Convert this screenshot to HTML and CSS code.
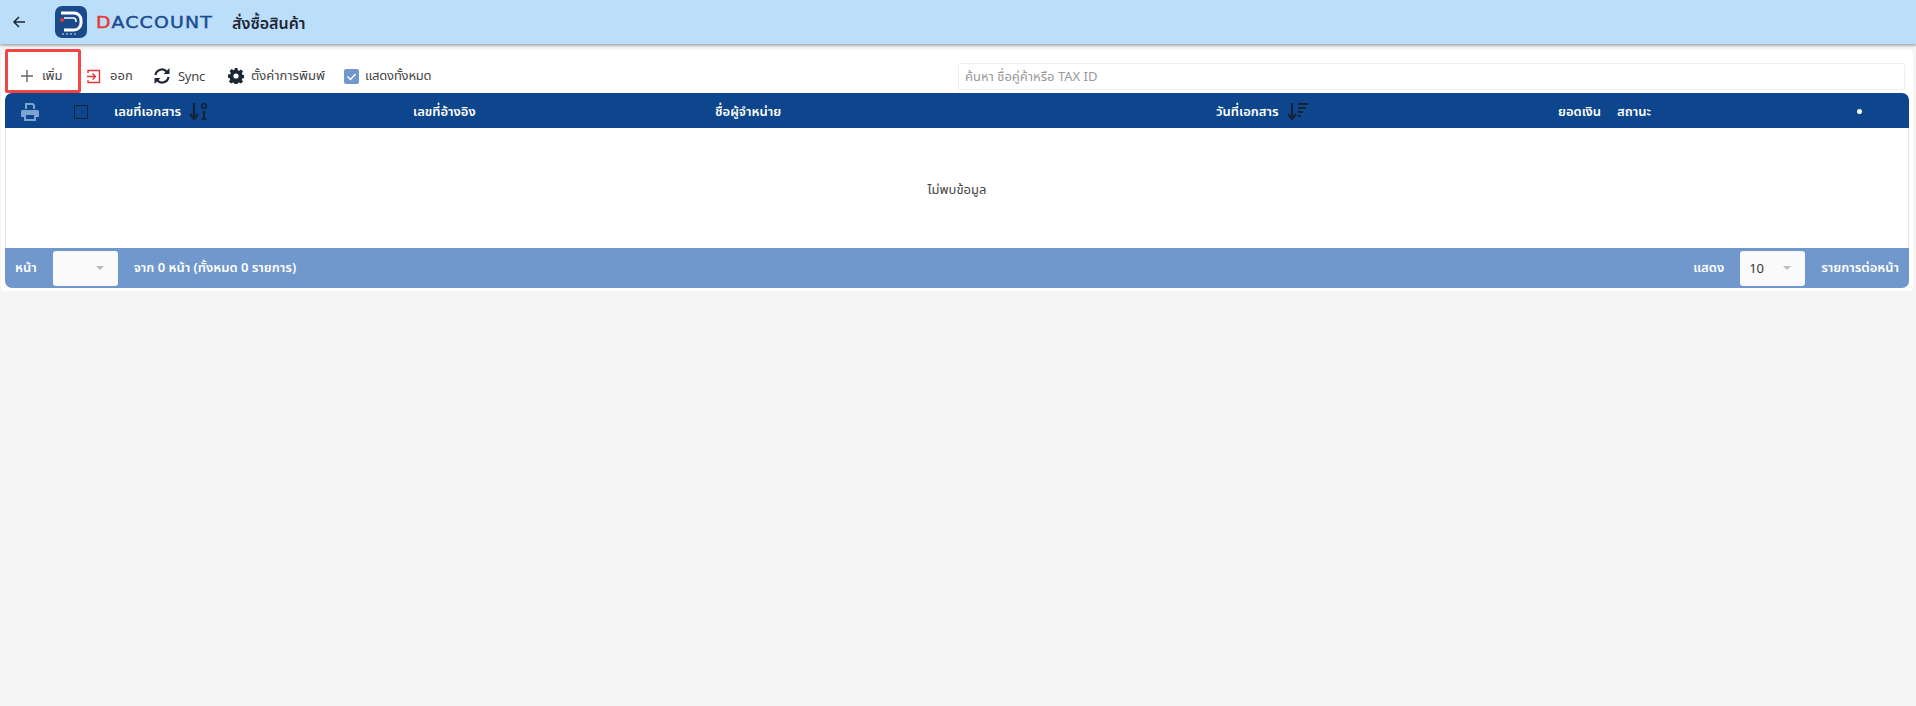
FILE: index.html
```html
<!DOCTYPE html>
<html lang="th">
<head>
  <meta charset="UTF-8" />
  <title>สั่งซื้อสินค้า</title>
  <link rel="stylesheet" href="styles.css">
</head>
<body>

  <header class="topbar">
    <svg class="back" width="16" height="16" viewBox="0 0 16 16"><path d="M14 8H3M8 3L3 8l5 5" fill="none" stroke="#1c2733" stroke-width="1.5"/></svg>
    <svg class="logo-mark" width="32" height="32" viewBox="0 0 32 32">
      <rect width="32" height="32" rx="7" fill="#1a4a8c"/>
      <path d="M6 7h13a7 7 0 0 1 7 7v3a7 7 0 0 1-7 7H9" fill="none" stroke="#fff" stroke-width="3"/>
      <path d="M9 12h9a3 3 0 0 1 3 3v1" fill="none" stroke="#fff" stroke-width="1.500"/>
      <circle cx="7" cy="14" r="2" fill="#e53935"/>
      <path d="M7 28h14" stroke="#cfe0f3" stroke-width="1.200" stroke-dasharray="2 2"/>
    </svg>
    <span class="logo-wrap"><span class="logo-text"><b>D</b>ACCOUNT</span></span>
    <h1 class="page-title">สั่งซื้อสินค้า</h1>
  </header>

  <main class="card">
    <div class="toolbar">
      <button class="tool tool-add">
        <svg width="14" height="14" viewBox="0 0 14 14"><path d="M7 1v12M1 7h12" stroke="#666" stroke-width="1.400"/></svg>
        เพิ่ม
      </button>
      <button class="tool tool-exit">
        <svg width="15" height="15" viewBox="0 0 15 15"><path d="M2 4V1.500h11.500v12H2V11" fill="none" stroke="#e53935" stroke-width="1.400"/><path d="M1 7.500h8M6.500 4.500l3 3-3 3" fill="none" stroke="#e53935" stroke-width="1.400"/></svg>
        ออก
      </button>
      <button class="tool tool-sync">
        <svg width="18" height="18" viewBox="0 0 18 18"><path d="M2.500 8a6.500 6.500 0 0 1 11.300-3.300M15.500 10a6.500 6.500 0 0 1-11.300 3.300" fill="none" stroke="#1c2733" stroke-width="2.200"/><path d="M16.500 1v6h-6zM1.500 17v-6h6z" fill="#1c2733"/></svg>
        Sync
      </button>
      <button class="tool tool-print">
        <svg width="16" height="16" viewBox="0 0 16 16"><path fill-rule="evenodd" fill="#1c2733" d="M6.600 0h2.800l.4 2.200 1.300.6 1.900-1.200 2 2-1.200 1.900.6 1.300 2.200.4v2.800l-2.200.4-.6 1.300 1.200 1.900-2 2-1.900-1.200-1.300.6-.4 2.200H6.600l-.4-2.200-1.300-.6L3 15.400l-2-2 1.200-1.900-.6-1.300L0 9.400V6.600l2.200-.4.6-1.300L1.600 3l2-2 1.900 1.200 1.300-.6zM8 5.400a2.600 2.600 0 1 0 0 5.200 2.600 2.600 0 0 0 0-5.200z"/></svg>
        ตั้งค่าการพิมพ์
      </button>
      <label class="tool tool-all">
        <span class="check"><svg width="15" height="15" viewBox="0 0 15 15"><path d="M3.500 7.500l3 3 5-5.500" fill="none" stroke="#fff" stroke-width="1.300"/></svg></span>
        แสดงทั้งหมด
      </label>
      <input class="search" type="text" placeholder="ค้นหา ชื่อคู่ค้าหรือ TAX ID">
    </div>

    <div class="grid-head">
      <div class="col col-print">
        <svg width="20" height="20" viewBox="0 0 20 20"><path fill="#7ea3d0" fill-rule="evenodd" d="M5 1h8l2 2v4h-2V3.500L12 3H7v4H5zM2.500 8h15A1.500 1.500 0 0 1 19 9.500V15h-3v4H4v-4H1V9.500A1.500 1.500 0 0 1 2.500 8zM6 13v4h8v-4z"/></svg>
      </div>
      <div class="col col-check"><span class="box"></span></div>
      <div class="col col-doc">เลขที่เอกสาร
        <svg width="20" height="19" viewBox="0 0 20 19"><path d="M5 1v15M1 12l4 5 4-5" fill="none" stroke="#14233a" stroke-width="2.200"/><circle cx="15" cy="4" r="2.300" fill="none" stroke="#14233a" stroke-width="1.800"/><path d="M13 9h3v7h1.500v2h-5v-2H14v-5h-1z" fill="#14233a"/></svg>
      </div>
      <div class="col col-ref">เลขที่อ้างอิง</div>
      <div class="col col-vendor">ชื่อผู้จำหน่าย</div>
      <div class="col col-date">วันที่เอกสาร
        <svg width="22" height="19" viewBox="0 0 22 19"><path d="M5 1v15M1 12l4 5 4-5" fill="none" stroke="#14233a" stroke-width="2.200"/><path d="M11 2h10M11 6h8M11 10h5M11 14h3" stroke="#14233a" stroke-width="1.800"/></svg>
      </div>
      <div class="col col-amount">ยอดเงิน</div>
      <div class="col col-status">สถานะ</div>
      <div class="col col-more"><span class="dot"></span></div>
    </div>

    <div class="grid-body">ไม่พบข้อมูล</div>

    <div class="grid-foot">
      <div class="foot-group">
        <span>หน้า</span>
        <span class="pick"><i class="caret"></i></span>
        <span>จาก 0 หน้า (ทั้งหมด 0 รายการ)</span>
      </div>
      <div class="foot-group">
        <span>แสดง</span>
        <span class="pick"><em>10</em><i class="caret"></i></span>
        <span>รายการต่อหน้า</span>
      </div>
    </div>

    <div class="highlight"></div>
  </main>

</body>
</html>
```

FILE: styles.css
```css
* {
  box-sizing: border-box;
}
body {
  margin: 0;
  height: 706px;
  overflow: hidden;
  background-color: #f5f5f5;
  color: #333;
  font-family: 'Noto Sans', 'Noto Sans Thai', 'Roboto', sans-serif;
  font-size: 13px;
}

.topbar {
  display: flex;
  align-items: center;
  height: 44px;
  padding-left: 11px;
  background-color: #bbdefb;
  box-shadow: 0 2px 2px rgba(0, 0, 0, 0.28);
}
.back {
  margin-right: 28px;
}
.logo-mark {
  margin-right: 9px;
}
.logo-wrap {
  width: 136px;
}
.logo-text {
  display: inline-block;
  font-family: 'DejaVu Sans', sans-serif;
  font-size: 16px;
  letter-spacing: 1px;
  color: #1a4a8c;
  white-space: nowrap;
  transform: scaleX(1.18);
  transform-origin: left center;
  -webkit-text-stroke: 0.4px currentColor;
}
.logo-text b {
  font-weight: 400;
  color: #e53935;
}
.page-title {
  margin: 3px 0 0;
  font-size: 16px;
  font-weight: 600;
  color: #1c2733;
}

.card {
  position: relative;
  margin: 6px 0 0 1px;
  width: 1912px;
  padding: 0 4px 3px 4px;
  background-color: #fff;
  border-radius: 4px;
}

.toolbar {
  display: flex;
  align-items: center;
  height: 43px;
  padding-top: 9px;
}
.tool {
  display: flex;
  align-items: center;
  flex: none;
  padding: 0;
  border: none;
  background: none;
  font: inherit;
  color: #444;
  white-space: nowrap;
}
.tool-add {
  gap: 8px;
  margin-left: 15px;
  width: 66px;
}
.tool-exit {
  gap: 9px;
  width: 67px;
}
.tool-sync {
  gap: 7px;
  width: 75px;
  letter-spacing: -0.3px;
}
.tool-print {
  gap: 7px;
  width: 116px;
}
.tool-all {
  gap: 6px;
  letter-spacing: -0.2px;
}
.check {
  display: block;
  width: 15px;
  height: 15px;
  background-color: #7098cc;
  border-radius: 2px;
}
.search {
  margin-left: auto;
  margin-right: 4px;
  width: 947px;
  height: 27px;
  padding: 0 6px;
  border: 1px solid #eee;
  border-radius: 3px;
  font: inherit;
  font-size: 13px;
}
.search::placeholder {
  color: #999;
}

.grid-head {
  display: flex;
  align-items: center;
  height: 35px;
  padding-top: 2px;
  background-color: #0d468c;
  border-radius: 7px 7px 0 0;
  color: #fff;
  font-weight: 600;
}
.col {
  display: flex;
  align-items: center;
  gap: 8px;
  flex: none;
}
.col-print { width: 50px; padding-left: 15px; }
.col-check { width: 59px; padding-left: 19px; }
.col-doc { width: 299px; }
.col-ref { width: 302px; }
.col-vendor { width: 501px; }
.col-date { width: 342px; }
.col-amount { width: 59px; }
.col-status { width: 240px; }
.box {
  width: 14px;
  height: 14px;
  border: 1px solid #14233a;
}
.dot {
  width: 5px;
  height: 5px;
  border-radius: 50%;
  background-color: #fff;
}

.grid-body {
  display: flex;
  align-items: center;
  justify-content: center;
  height: 120px;
  padding-top: 3px;
  border-left: 1px solid #e4e4e4;
  border-right: 1px solid #e4e4e4;
  color: #444;
}

.grid-foot {
  display: flex;
  align-items: center;
  justify-content: space-between;
  height: 40px;
  padding: 0 10px;
  background-color: #7098cc;
  border-radius: 0 0 7px 7px;
  color: #fff;
  font-size: 13px;
  font-weight: 600;
}
.foot-group {
  display: flex;
  align-items: center;
  gap: 16px;
}
.pick {
  display: flex;
  align-items: center;
  justify-content: space-between;
  width: 65px;
  height: 35px;
  padding: 0 14px 0 9px;
  background-color: #fafafa;
  border-radius: 3px;
  color: #333;
  font-weight: 400;
}
.pick em {
  font-style: normal;
}
.caret {
  margin-left: auto;
  width: 0;
  height: 0;
  border-left: 4px solid transparent;
  border-right: 4px solid transparent;
  border-top: 4px solid #bbb;
}

.highlight {
  position: absolute;
  left: 4px;
  top: -1px;
  width: 76px;
  height: 44px;
  border: 3px solid #f44545;
  border-radius: 2px;
}
```
